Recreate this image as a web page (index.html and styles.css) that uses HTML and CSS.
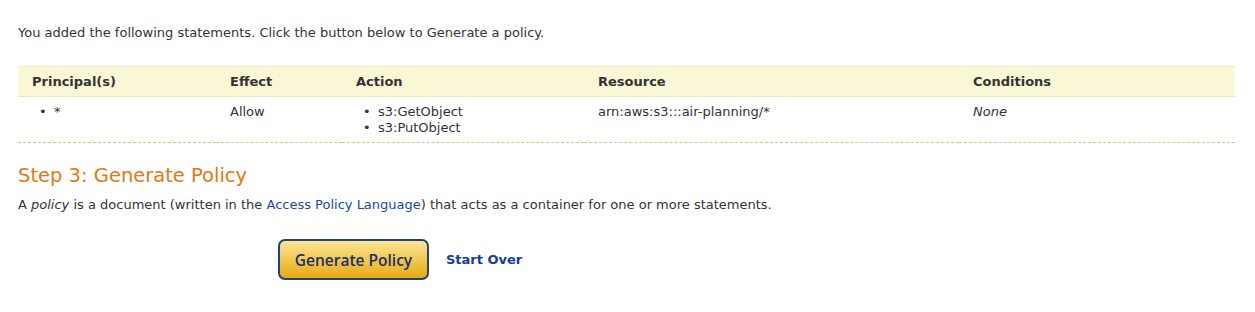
FILE: index.html
```html
<!DOCTYPE html>
<html lang="en">
<head>
    <meta charset="UTF-8">
    <title>AWS Policy Generator</title>
    <link rel="stylesheet" href="styles.css">
</head>
<body>
    <div class="page">
        <p class="intro">You added the following statements. Click the button below to Generate a policy.</p>

        <!-- Tabela de statements -->
        <table class="statements">
            <thead>
                <tr>
                    <th class="col-principal">Principal(s)</th>
                    <th class="col-effect">Effect</th>
                    <th class="col-action">Action</th>
                    <th class="col-resource">Resource</th>
                    <th>Conditions</th>
                </tr>
            </thead>
            <tbody>
                <tr>
                    <td><ul><li>*</li></ul></td>
                    <td>Allow</td>
                    <td><ul><li>s3:GetObject</li><li>s3:PutObject</li></ul></td>
                    <td>arn:aws:s3:::air-planning/*</td>
                    <td><em>None</em></td>
                </tr>
            </tbody>
        </table>

        <h2 class="step">Step 3: Generate Policy</h2>
        <p class="desc">A <em>policy</em> is a document (written in the <a href="#">Access Policy Language</a>) that acts as a container for one or more statements.</p>

        <div class="actions">
            <button class="generate">Generate Policy</button>
            <a href="#" class="start-over">Start Over</a>
        </div>
    </div>
</body>
</html>
```

FILE: styles.css
```css
* {
    margin: 0;
    padding: 0;
    box-sizing: border-box;
}
body {
    font-family: "DejaVu Sans", Verdana, sans-serif;
    font-size: 13px;
    color: #333;
    background: #fff;
}
.page {
    padding: 25px 20px 0 18px;
}
.intro {
    line-height: 16px;
}

/* Tabela */
.statements {
    width: 100%;
    margin-top: 25px;
    border-collapse: collapse;
}
.statements th {
    background-color: #faf7d6;
    border-top: 1px solid #f1ecc4;
    border-bottom: 1px solid #ede8c0;
    text-align: left;
    font-weight: bold;
    color: #333;
    padding: 6px 14px 7px;
    height: 30px;
}
.statements td {
    vertical-align: top;
    padding: 7px 14px 5px;
    height: 46px;
    line-height: 16px;
    border-bottom: 1px dashed #c9c98a;
}
.col-principal { width: 198px; }
.col-effect { width: 126px; }
.col-action { width: 242px; }
.col-resource { width: 375px; }
.statements ul {
    list-style: none;
}
.statements li::before {
    content: "\2022";
    display: inline-block;
    width: 15px;
    margin-left: 7px;
}

/* Passo 3 */
.step {
    font-family: "DejaVu Sans", sans-serif;
    font-weight: normal;
    font-size: 19.5px;
    color: #e47911;
    margin-top: 21px;
    line-height: 24px;
}
.desc {
    margin-top: 9px;
    line-height: 16px;
}
.desc a {
    color: #1a47a6;
    text-decoration: none;
}

.actions {
    display: flex;
    align-items: center;
    gap: 17px;
    margin-top: 26px;
    padding-left: 260px;
}
.generate {
    font-family: "Open Sans", sans-serif;
    font-weight: 600;
    font-size: 15.5px;
    color: #1e2f6a;
    width: 151px;
    height: 41px;
    border: 2px solid #23407f;
    border-radius: 7px;
    background: linear-gradient(to bottom, #fde594, #e6ab14);
    cursor: pointer;
}
.start-over {
    font-weight: bold;
    font-size: 13px;
    color: #153ba0;
    text-decoration: none;
}
```
